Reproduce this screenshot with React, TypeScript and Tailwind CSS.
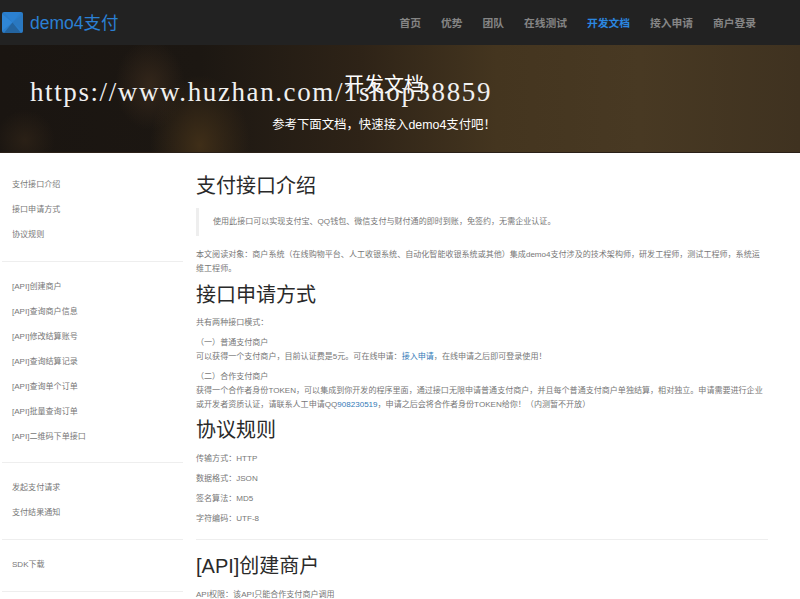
const FONT = "font-['Arial','Liberation_Sans','Noto_Sans_CJK_SC',sans-serif]";

const NAV = ["首页", "优势", "团队", "在线测试", "开发文档", "接入申请", "商户登录"];
const SIDE_GROUPS = [
  { items: ["支付接口介绍", "接口申请方式", "协议规则"], pt: "pt-[19px]", pb: "pb-[14px]" },
  {
    items: [
      "[API]创建商户",
      "[API]查询商户信息",
      "[API]修改结算账号",
      "[API]查询结算记录",
      "[API]查询单个订单",
      "[API]批量查询订单",
      "[API]二维码下单接口",
    ],
    pt: "pt-[12px]",
    pb: "pb-[13px]",
  },
  { items: ["发起支付请求", "支付结果通知"], pt: "pt-[12px]", pb: "pb-[14px]" },
  { items: ["SDK下载"], pt: "pt-[12px]", pb: "pb-[14px]" },
];

function Logo() {
  return (
    <svg width="21" height="21" viewBox="0 0 21 21" className="shrink-0">
      <rect width="21" height="21" rx="2" fill="#2a7cc8" />
      <path d="M0 2 L10.5 10.5 L0 19 Z" fill="#2f86d6" />
      <path d="M2 0 H19 L10.5 10.5 Z" fill="#2b80d0" />
      <path d="M21 2 L10.5 10.5 L21 19 Z" fill="#2a78c0" />
      <path d="M2 21 H19 L10.5 10.5 Z" fill="#24649f" />
    </svg>
  );
}

function H1({ children, className = "" }: { children: React.ReactNode; className?: string }) {
  return <h1 className={`h-[28px] text-[20px] leading-[28px] font-normal text-[#2a2a2a] ${className}`}>{children}</h1>;
}

export default function App() {
  return (
    <div className={`${FONT} h-[599px] w-[800px] overflow-hidden bg-white text-[8.05px] leading-[14px] text-[#777]`}>
      <header className="flex h-[45px] items-center bg-[#222] pl-[2px] pr-[44px]">
        <Logo />
        <span className="ml-[7px] text-[17.5px] text-[#2b80d4]">demo4支付</span>
        <nav className="ml-auto flex gap-[20px] text-[10.75px] font-bold text-[#858585]">
          {NAV.map((n) => (
            <a key={n} className={n === "开发文档" ? "text-[#2b87e0]" : ""}>
              {n}
            </a>
          ))}
        </nav>
      </header>

      <section className="relative flex h-[108px] flex-col items-center border-b border-[#2a2018] bg-[radial-gradient(ellipse_50px_70px_at_200px_100px,#3f2e18,transparent),radial-gradient(ellipse_35px_45px_at_150px_40px,#33261a,transparent),radial-gradient(ellipse_30px_30px_at_25px_95px,#2a2016,transparent),linear-gradient(90deg,#1a1511_0%,#1c1712_25%,#2e2317_45%,#44351f_62%,#483923_80%,#3f3220_100%)] pr-[32px] text-white">
        <h2 className="mt-[26px] text-[20px] leading-[28px] font-normal">开发文档</h2>
        <p className="mt-[18px] text-[12.4px] leading-[16px]">参考下面文档，快速接入demo4支付吧！</p>
        <span className="absolute left-[30px] top-[32px] font-['Liberation_Serif',serif] text-[27px] leading-[30px] tracking-[1.6px] text-[#f0f0f0]">
          https://www.huzhan.com/1shop38859
        </span>
      </section>

      <div className="flex">
        <aside className="ml-[2px] w-[181px] shrink-0">
          {SIDE_GROUPS.map((g, i) => (
            <ul key={i} className={`border-b border-[#eee] ${g.pt} ${g.pb}`}>
              {g.items.map((item) => (
                <li key={item} className="h-[25px] pl-[10px] leading-[25px]">
                  {item}
                </li>
              ))}
            </ul>
          ))}
        </aside>

        <main className="ml-[13px] w-[572px] pt-[19px]">
          <H1>支付接口介绍</H1>
          <blockquote className="mt-[8px] flex h-[28px] items-center border-l-[3px] border-[#eee] pl-[14px]">
            使用此接口可以实现支付宝、QQ钱包、微信支付与财付通的即时到账，免签约，无需企业认证。
          </blockquote>
          <p className="mt-[12px]">
            本文阅读对象：商户系统（在线购物平台、人工收银系统、自动化智能收银系统或其他）集成demo4支付涉及的技术架构师，研发工程师，测试工程师，系统运
            <br />
            维工程师。
          </p>
          <H1 className="mt-[5px]">接口申请方式</H1>
          <p className="mt-[7px]">共有两种接口模式：</p>
          <p className="mt-[6px]">
            （一）普通支付商户
            <br />
            可以获得一个支付商户，目前认证费是5元。可在线申请：<a className="text-[#337ab7]">接入申请</a>，在线申请之后即可登录使用！
          </p>
          <p className="mt-[6px]">
            （二）合作支付商户
            <br />
            获得一个合作者身份TOKEN，可以集成到你开发的程序里面，通过接口无限申请普通支付商户，并且每个普通支付商户单独结算，相对独立。申请需要进行企业
            <br />
            或开发者资质认证，请联系人工申请QQ<a className="text-[#337ab7]">908230519</a>，申请之后会将合作者身份TOKEN给你！（内测暂不开放）
          </p>
          <H1 className="mt-[4px]">协议规则</H1>
          <p className="mt-[8px]">传输方式：HTTP</p>
          <p className="mt-[6px]">数据格式：JSON</p>
          <p className="mt-[6px]">签名算法：MD5</p>
          <p className="mt-[6px]">字符编码：UTF-8</p>
          <hr className="mt-[13px] border-[#eee]" />
          <H1 className="mt-[12px]">[API]创建商户</H1>
          <p className="mt-[8px]">API权限：该API只能合作支付商户调用</p>
        </main>
      </div>
    </div>
  );
}
